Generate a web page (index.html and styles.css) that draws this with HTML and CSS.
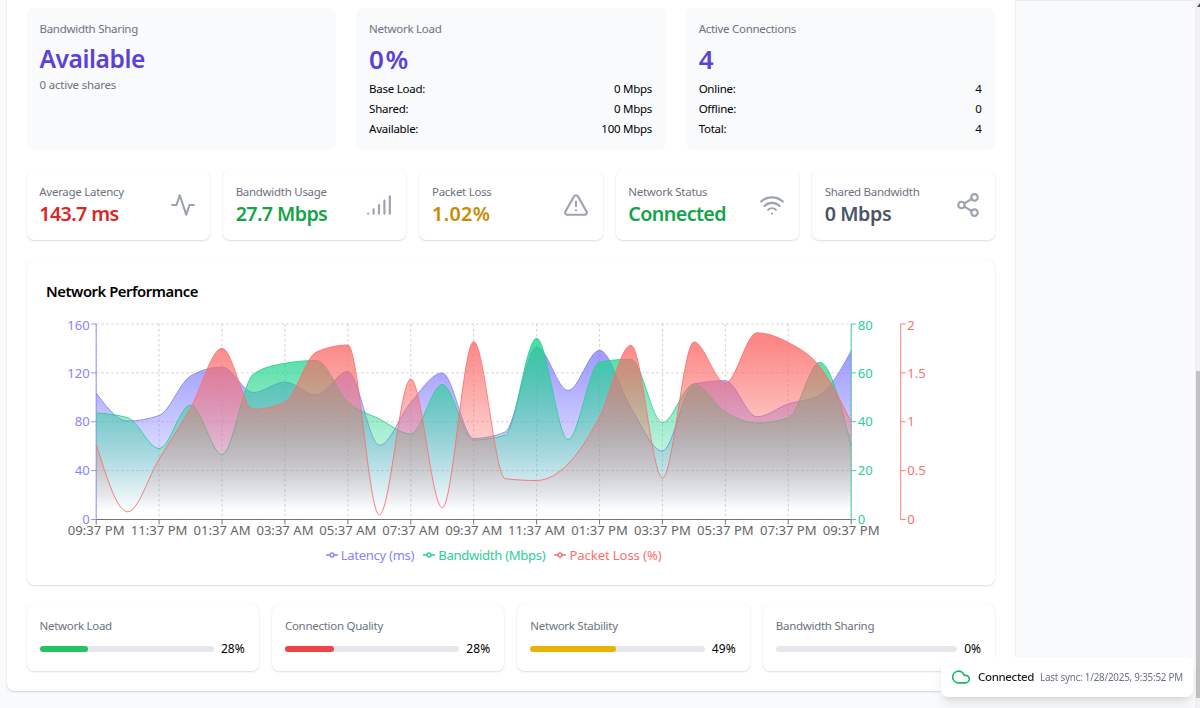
FILE: index.html
```
<!DOCTYPE html>
<html lang="en">
<head>
    <meta charset="UTF-8">
    <meta name="viewport" content="width=device-width, initial-scale=1.0">
    <title>Network Dashboard</title>
    <link rel="stylesheet" href="styles.css">
</head>
<body>
    <main class="panel">
        <section class="overview">
            <div class="overview-card">
                <h3 class="label">Bandwidth Sharing</h3>
                <p class="big">Available</p>
                <p class="note">0 active shares</p>
            </div>
            <div class="overview-card">
                <h3 class="label">Network Load</h3>
                <p class="big percent">0%</p>
                <div class="row"><span>Base Load:</span><span>0 Mbps</span></div>
                <div class="row"><span>Shared:</span><span>0 Mbps</span></div>
                <div class="row"><span>Available:</span><span>100 Mbps</span></div>
            </div>
            <div class="overview-card">
                <h3 class="label">Active Connections</h3>
                <p class="big count">4</p>
                <div class="row"><span>Online:</span><span>4</span></div>
                <div class="row"><span>Offline:</span><span>0</span></div>
                <div class="row"><span>Total:</span><span>4</span></div>
            </div>
        </section>

        <section class="stats">
            <div class="card stat">
                <div>
                    <p class="label">Average Latency</p>
                    <p class="value red">143.7 ms</p>
                </div>
                <svg class="icon" viewBox="0 0 24 24"><path d="M22 12h-4l-3 9L9 3l-3 9H2"/></svg>
            </div>
            <div class="card stat">
                <div>
                    <p class="label">Bandwidth Usage</p>
                    <p class="value green">27.7 Mbps</p>
                </div>
                <svg class="icon" viewBox="0 0 24 24"><path d="M2 20h.01M7 20v-4M12 20v-8M17 20V8M22 4v16"/></svg>
            </div>
            <div class="card stat">
                <div>
                    <p class="label">Packet Loss</p>
                    <p class="value percent yellow">1.02%</p>
                </div>
                <svg class="icon" viewBox="0 0 24 24"><path d="m21.73 18-8-14a2 2 0 0 0-3.48 0l-8 14A2 2 0 0 0 4 21h16a2 2 0 0 0 1.73-3ZM12 9v4M12 17h.01"/></svg>
            </div>
            <div class="card stat">
                <div>
                    <p class="label">Network Status</p>
                    <p class="value green">Connected</p>
                </div>
                <svg class="icon" viewBox="0 0 24 24"><path d="M12 20h.01M2 8.82a15 15 0 0 1 20 0M5 12.86a10 10 0 0 1 14 0M8.5 16.43a5 5 0 0 1 7 0"/></svg>
            </div>
            <div class="card stat">
                <div>
                    <p class="label">Shared Bandwidth</p>
                    <p class="value gray">0 Mbps</p>
                </div>
                <svg class="icon" viewBox="0 0 24 24"><circle cx="18" cy="5" r="3"/><circle cx="6" cy="12" r="3"/><circle cx="18" cy="19" r="3"/><path d="m8.59 13.51 6.83 3.98M15.41 6.51l-6.82 3.98"/></svg>
            </div>
        </section>

        <section class="card chart-card">
            <h2>Network Performance</h2>
            <svg id="chart" class="chart" viewBox="45.8 319 930 224">
                <defs>
                    <linearGradient id="fill-latency" x1="0" y1="0" x2="0" y2="1">
                        <stop offset="5%" stop-color="#8884ff" stop-opacity="0.8"/>
                        <stop offset="95%" stop-color="#8884ff" stop-opacity="0"/>
                    </linearGradient>
                    <linearGradient id="fill-bandwidth" x1="0" y1="0" x2="0" y2="1">
                        <stop offset="5%" stop-color="#22d48c" stop-opacity="0.8"/>
                        <stop offset="95%" stop-color="#22d48c" stop-opacity="0"/>
                    </linearGradient>
                    <linearGradient id="fill-loss" x1="0" y1="0" x2="0" y2="1">
                        <stop offset="5%" stop-color="#fb6b68" stop-opacity="0.8"/>
                        <stop offset="95%" stop-color="#fb6b68" stop-opacity="0"/>
                    </linearGradient>
                </defs>
            </svg>
            <div class="legend">
                <span class="latency"><svg viewBox="0 0 32 32"><path d="M0 16h10.7a5.3 5.3 0 1 1 10.6 0H32M21.3 16a5.3 5.3 0 1 1-10.6 0"/></svg>Latency (ms)</span>
                <span class="bandwidth"><svg viewBox="0 0 32 32"><path d="M0 16h10.7a5.3 5.3 0 1 1 10.6 0H32M21.3 16a5.3 5.3 0 1 1-10.6 0"/></svg>Bandwidth (Mbps)</span>
                <span class="loss"><svg viewBox="0 0 32 32"><path d="M0 16h10.7a5.3 5.3 0 1 1 10.6 0H32M21.3 16a5.3 5.3 0 1 1-10.6 0"/></svg>Packet Loss (%)</span>
            </div>
        </section>

        <section class="meters">
            <div class="card meter">
                <p class="label">Network Load</p>
                <div class="meter-row">
                    <div class="track"><div class="bar bar-green" style="width: 28%"></div></div>
                    <span>28%</span>
                </div>
            </div>
            <div class="card meter">
                <p class="label">Connection Quality</p>
                <div class="meter-row">
                    <div class="track"><div class="bar bar-red" style="width: 28%"></div></div>
                    <span>28%</span>
                </div>
            </div>
            <div class="card meter">
                <p class="label">Network Stability</p>
                <div class="meter-row">
                    <div class="track"><div class="bar bar-yellow" style="width: 49%"></div></div>
                    <span>49%</span>
                </div>
            </div>
            <div class="card meter">
                <p class="label">Bandwidth Sharing</p>
                <div class="meter-row">
                    <div class="track"><div class="bar" style="width: 0%"></div></div>
                    <span>0%</span>
                </div>
            </div>
        </section>
    </main>

    <aside class="side"></aside>

    <div class="scrollbar">
        <svg viewBox="0 0 5 8"><path d="M5 3v4H2z"/></svg>
        <div class="thumb"></div>
    </div>

    <div class="toast">
        <svg viewBox="0 0 24 24"><path d="M17.5 19H9a7 7 0 1 1 6.71-9h1.79a4.5 4.5 0 1 1 0 9Z"/></svg>
        <span class="toast-status">Connected</span>
        <span class="toast-sync">Last sync: 1/28/2025, 9:35:52 PM</span>
    </div>

    <script src="script.js"></script>
</body>
</html>
```
FILE: styles.css
```
* {
    box-sizing: border-box;
}
body {
    margin: 0;
    height: 708px;
    display: flex;
    overflow: hidden;
    background-color: #f9fafb;
    color: #000;
    font-family: "Noto Sans", sans-serif;
    font-size: 11.5px;
    line-height: 16px;
}
h2, h3, p {
    margin: 0;
}
.panel {
    width: 1008.7px;
    height: 690.5px;
    margin-left: 6.5px;
    padding: 8px 20px 0 20px;
    background-color: white;
    border-radius: 0 0 7px 7px;
    box-shadow: 0 1px 2px rgba(0, 0, 0, 0.16);
}
.side {
    flex: 1;
    border-top: 1px solid #ededf0;
}
.label {
    font-size: 11.5px;
    font-weight: 400;
    letter-spacing: -0.28px;
    color: #6b7280;
}
.overview {
    display: grid;
    grid-template-columns: repeat(3, 1fr);
    gap: 20px;
}
.overview-card {
    height: 142px;
    padding: 13px;
    background-color: #f9fafb;
    border-radius: 7px;
}
.big {
    margin-top: 6px;
    font-size: 24.6px;
    line-height: 32px;
    font-weight: 600;
    letter-spacing: -0.45px;
    color: #5a41d8;
}
.note {
    margin-top: 2px;
    letter-spacing: -0.2px;
    color: #6b7280;
}
.row {
    display: flex;
    justify-content: space-between;
    margin-bottom: 4px;
    padding-right: 0.5px;
    letter-spacing: -0.25px;
}
.big + .row {
    margin-top: 6px;
}
.card {
    background-color: white;
    border-radius: 7px;
    box-shadow: 0 1px 2px rgba(0, 0, 0, 0.13), 0 0 1px rgba(0, 0, 0, 0.08);
}
.stats {
    display: grid;
    grid-template-columns: repeat(5, 1fr);
    gap: 13px;
    margin-top: 20px;
}
.stat {
    display: flex;
    align-items: center;
    justify-content: space-between;
    height: 70px;
    padding: 0 14px 0 12.8px;
}
.value {
    font-size: 19.7px;
    line-height: 27px;
    font-weight: 600;
    letter-spacing: -0.6px;
}
.value.percent {
    letter-spacing: 0.4px;
}
.big.percent {
    font-size: 26px;
    letter-spacing: 1.6px;
}
.big.count {
    font-size: 26px;
}
.red {
    color: #dc2626;
}
.green {
    color: #16a34a;
}
.yellow {
    color: #ca8a04;
}
.gray {
    letter-spacing: -0.4px;
    color: #4b5563;
}
.icon {
    width: 26px;
    height: 26px;
    fill: none;
    stroke: #9ca3af;
    stroke-width: 2;
    stroke-linecap: round;
    stroke-linejoin: round;
}
.chart-card {
    height: 325px;
    margin-top: 20px;
    padding: 20px 19.5px;
}
.chart-card h2 {
    height: 39px;
    font-size: 14.8px;
    line-height: 23px;
    font-weight: 600;
    letter-spacing: -0.45px;
}
.chart {
    display: block;
    width: 930px;
    height: 224px;
    overflow: visible;
}
.chart text {
    font-size: 13.1px;
}
.legend {
    display: flex;
    justify-content: center;
    gap: 9px;
    padding-right: 34.5px;
    font-size: 13.1px;
    line-height: 24px;
    letter-spacing: -0.3px;
}
.legend span {
    display: flex;
    align-items: center;
}
.legend svg {
    width: 12px;
    height: 12px;
    margin-right: 3px;
    fill: none;
    stroke: currentColor;
    stroke-width: 4;
}
.latency {
    color: #8884ff;
}
.bandwidth {
    color: #2dce98;
}
.loss {
    letter-spacing: -0.1px;
    color: #f9706f;
}
.meters {
    display: grid;
    grid-template-columns: repeat(4, 1fr);
    gap: 13px;
    margin-top: 19px;
}
.meter {
    height: 67px;
    padding: 14px 14px 0 13px;
}
.meter-row {
    display: flex;
    align-items: center;
    gap: 7px;
    margin-top: 7px;
    font-size: 12px;
    letter-spacing: 0.1px;
}
.track {
    flex: 1;
    height: 6.5px;
    background-color: #e5e7eb;
    border-radius: 4px;
}
.bar {
    height: 100%;
    border-radius: 4px;
}
.bar-green {
    background-color: #22c55e;
}
.bar-red {
    background-color: #ef4444;
}
.bar-yellow {
    background-color: #eab308;
}
.scrollbar {
    width: 5px;
    background-color: #f1f1f1;
}
.scrollbar svg {
    display: block;
    width: 5px;
    height: 8px;
    margin-bottom: 363px;
    fill: #505050;
}
.thumb {
    height: 327px;
    margin-left: 1px;
    background-color: #c1c1c1;
}
.toast {
    position: fixed;
    right: 7px;
    bottom: 11px;
    display: flex;
    align-items: center;
    width: 252px;
    height: 40px;
    padding: 0 10px;
    background-color: white;
    border-radius: 7px;
    box-shadow: 0 8px 12px -2px rgba(0, 0, 0, 0.1), 0 3px 5px -2px rgba(0, 0, 0, 0.08);
    white-space: nowrap;
}
.toast svg {
    flex-shrink: 0;
    width: 20px;
    height: 20px;
    margin-right: 7px;
    fill: none;
    stroke: #22b566;
    stroke-width: 2;
    stroke-linecap: round;
    stroke-linejoin: round;
}
.toast-status {
    margin-right: 6px;
    font-weight: 500;
    letter-spacing: -0.35px;
    color: #1f2023;
}
.toast-sync {
    font-size: 9.85px;
    letter-spacing: -0.22px;
    color: #6b7280;
}
```
FILE: script.js
```
const chart = document.getElementById('chart');
const left = 96;
const right = 851;
const top_ = 324;
const bottom = 519.5;

// y positions of the hourly samples
const latency = [393, 421, 415.5, 376, 367, 392.5, 382, 395, 371.5, 445.3, 402.5, 373, 438.5, 432, 347, 390.5, 350.3, 408, 451, 384, 380.7, 416.8, 404, 395, 351];
const bandwidth = [413, 417.7, 448.5, 405, 454.5, 374, 363.3, 360.5, 402, 419, 434, 384.5, 440, 435, 338.3, 439.7, 362, 359.2, 422.7, 384, 412, 423, 418, 362.3, 446];
const loss = [444, 511.8, 459, 408, 348.3, 409.3, 402, 352, 345, 515, 379, 507.7, 341.7, 478.7, 480.5, 464, 417, 345.2, 478, 342, 383, 332.8, 342.5, 366.5, 422];

function add(name, attrs, text) {
    const el = document.createElementNS('http://www.w3.org/2000/svg', name);
    for (const key in attrs) {
        el.setAttribute(key, attrs[key]);
    }
    if (text !== undefined) {
        el.textContent = text;
    }
    chart.appendChild(el);
}

// monotone cubic through all points
function curve(ys) {
    const n = ys.length;
    const h = (right - left) / (n - 1);
    const s = [];
    for (let i = 0; i < n - 1; i++) {
        s.push((ys[i + 1] - ys[i]) / h);
    }
    const t = ys.map((y, i) => {
        if (i === 0 || i === n - 1) return 0;
        const a = s[i - 1], b = s[i];
        return (Math.sign(a) + Math.sign(b)) * Math.min(Math.abs(a), Math.abs(b), Math.abs(a + b) / 4) || 0;
    });
    t[0] = (3 * s[0] - t[1]) / 2;
    t[n - 1] = (3 * s[n - 2] - t[n - 2]) / 2;

    let d = `M${left},${ys[0]}`;
    for (let i = 1; i < n; i++) {
        const x0 = left + (i - 1) * h;
        const x1 = left + i * h;
        d += `C${x0 + h / 3},${ys[i - 1] + t[i - 1] * h / 3} ${x1 - h / 3},${ys[i] - t[i] * h / 3} ${x1},${ys[i]}`;
    }
    return d;
}

function line(x1, y1, x2, y2, stroke, dash) {
    add('line', { x1, y1, x2, y2, stroke, 'stroke-width': 0.9, 'stroke-dasharray': dash || 'none' });
}

for (let i = 0; i <= 4; i++) {
    const y = top_ + i * (bottom - top_) / 4;
    line(left, y, right, y, '#ccc', '2.5 2.5');
}
for (let i = 0; i <= 12; i++) {
    const x = left + i * (right - left) / 12;
    line(x, top_, x, bottom, '#ccc', '2.5 2.5');
}

line(left, bottom, right, bottom, '#666');
const hours = ['09', '11', '01', '03', '05', '07', '09', '11', '01', '03', '05', '07', '09'];
hours.forEach((hour, i) => {
    const x = left + i * (right - left) / 12;
    const half = i > 1 && i < 8 ? 'AM' : 'PM';
    line(x, bottom, x, bottom + 5, '#666');
    add('text', { x, y: 535, fill: '#666', 'text-anchor': 'middle' }, `${hour}:37 ${half}`);
});

function axis(x, dir, color, labels) {
    line(x, top_, x, bottom, color);
    labels.forEach((label, i) => {
        const y = bottom - i * (bottom - top_) / 4;
        line(x, y, x + 5 * dir, y, color);
        add('text', { x: x + 6.5 * dir, y: y + (i === 4 ? 6.2 : 4.7), fill: color, 'text-anchor': dir < 0 ? 'end' : 'start' }, label);
    });
}

axis(left, -1, '#8884ff', [0, 40, 80, 120, 160]);
axis(right, 1, '#2dce98', [0, 20, 40, 60, 80]);
axis(900.5, 1, '#f9706f', [0, 0.5, 1, 1.5, 2]);

[['latency', latency, '#8884e8'], ['bandwidth', bandwidth, '#2dce98'], ['loss', loss, '#f9706f']].forEach(([id, ys, color]) => {
    const d = curve(ys);
    add('path', { d: `${d}L${right},${bottom}L${left},${bottom}Z`, fill: `url(#fill-${id})` });
    add('path', { d, fill: 'none', stroke: color, 'stroke-width': 0.9 });
});
```
